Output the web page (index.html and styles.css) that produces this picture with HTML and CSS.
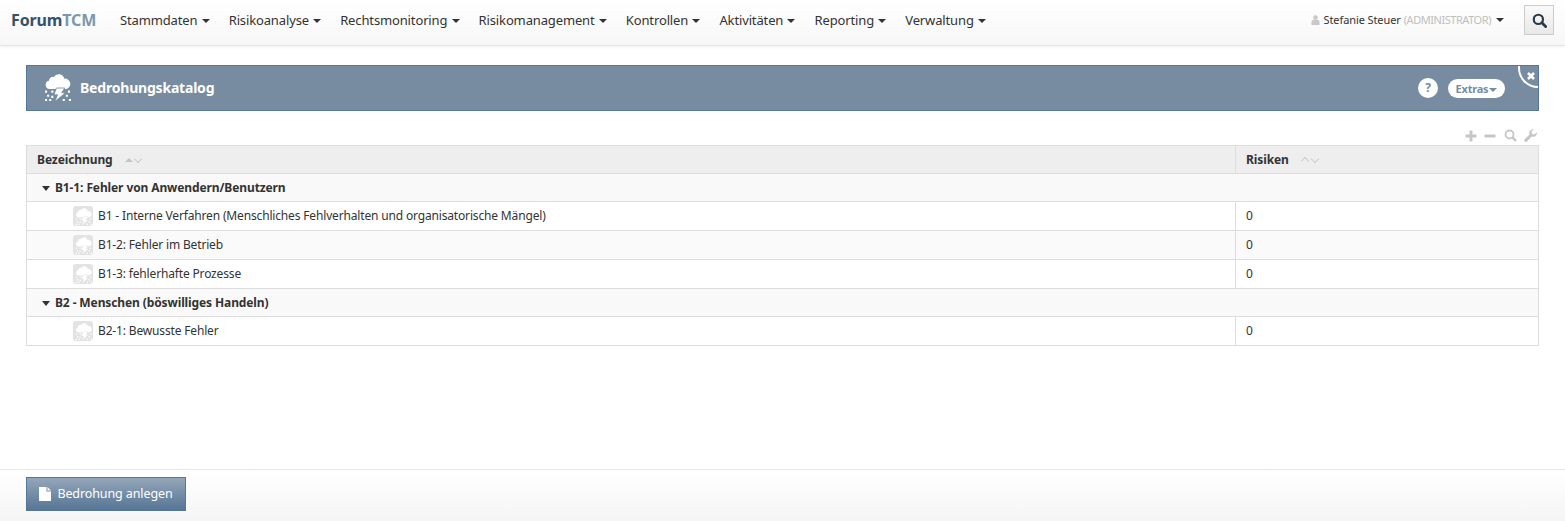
FILE: index.html
```html
<!DOCTYPE html>
<html lang="de">
<head>
<meta charset="utf-8">
<title>Bedrohungskatalog</title>
<link rel="stylesheet" href="styles.css">
</head>
<body>
<svg class="sprite" width="0" height="0" aria-hidden="true">
  <symbol id="storm" viewBox="0 0 26 26">
    <path fill="currentColor" d="M5.500 14.500a4 4 0 0 1-.8-7.900 4 4 0 0 1 4.800-3.800A5.500 5.500 0 0 1 19.500 4.500a5 5 0 0 1 1.500 10z"/>
    <path fill="currentColor" stroke="var(--storm-bg)" stroke-width=".8" d="M12 13.500h8l-3 4.500h3.800L10.500 26.500l2.500-6.500h-3.500z"/>
    <path fill="currentColor" d="M1 16h2v2H1zM7 16h2v2H7zM23 16h2v2h-2zM3 20h2v2H3zM7 21h2v2H7zM21 20h2v2h-2zM1 24h2v2H1zM5 24h2v2H5zM18 24h2v2h-2zM24 24h2v2h-2z"/>
  </symbol>
</svg>
<header class="navbar">
  <a class="brand"><span class="brand-a">Forum</span><span class="brand-b">TCM</span></a>
  <nav class="menu">
    <a class="menu-item">Stammdaten <i class="caret"></i></a>
    <a class="menu-item">Risikoanalyse <i class="caret"></i></a>
    <a class="menu-item">Rechtsmonitoring <i class="caret"></i></a>
    <a class="menu-item">Risikomanagement <i class="caret"></i></a>
    <a class="menu-item">Kontrollen <i class="caret"></i></a>
    <a class="menu-item">Aktivitäten <i class="caret"></i></a>
    <a class="menu-item">Reporting <i class="caret"></i></a>
    <a class="menu-item">Verwaltung <i class="caret"></i></a>
  </nav>
  <div class="user">
    <svg class="user-icon" viewBox="0 0 10 11"><circle cx="5" cy="2.800" r="2.600" fill="currentColor"/><path fill="currentColor" d="M.5 11V7.500Q.5 5.500 2.500 5.200h5Q9.500 5.500 9.500 7.500V11z"/></svg>
    <span class="user-name">Stefanie Steuer</span>
    <span class="user-role">(ADMINISTRATOR)</span>
    <i class="caret user-caret"></i>
  </div>
  <button class="search-btn" aria-label="Suche">
    <svg viewBox="0 0 16 16" width="15" height="15"><circle cx="6.800" cy="6.800" r="4.900" fill="none" stroke="currentColor" stroke-width="2.300"/><path d="M10.500 10.500l4 4" stroke="currentColor" stroke-width="3" stroke-linecap="round"/></svg>
  </button>
</header>

<main class="content">
  <section class="title-bar">
    <svg class="title-icon"><use href="#storm"/></svg>
    <h1 class="title">Bedrohungskatalog</h1>
    <div class="title-actions">
      <span class="help">?</span>
      <span class="extras">Extras<i class="caret extras-caret"></i></span>
    </div>
    <span class="close-tab">
      <svg viewBox="0 0 8 8" width="8" height="8"><path d="M1 1l6 6M7 1l-6 6" stroke="#fff" stroke-width="2.600"/></svg>
    </span>
  </section>

  <div class="tools">
    <svg viewBox="0 0 12 12" width="12" height="12"><path d="M6 .5v11M.5 6h11" stroke="currentColor" stroke-width="3"/></svg>
    <svg viewBox="0 0 12 12" width="12" height="12"><path d="M.5 6h11" stroke="currentColor" stroke-width="3"/></svg>
    <svg viewBox="0 0 13 13" width="13" height="13"><circle cx="5.500" cy="5.500" r="4" fill="none" stroke="currentColor" stroke-width="1.800"/><path d="M8.500 8.500l3.500 3.500" stroke="currentColor" stroke-width="2.400"/></svg>
    <svg viewBox="0 0 13 13" width="13" height="13"><path fill="currentColor" d="M12.800 3.300a3.800 3.800 0 0 1-5 4.300L3 12.400a1.400 1.400 0 0 1-2.300-2.100l4.900-4.700A3.800 3.800 0 0 1 9.700.3L7.500 2.600l.5 2.300 2.300.5z"/></svg>
  </div>

  <table class="grid">
    <colgroup><col><col class="col-risks"></colgroup>
    <thead>
      <tr>
        <th>Bezeichnung <span class="sort sort-a"><i class="sort-up on"></i><i class="sort-down"></i></span></th>
        <th>Risiken <span class="sort sort-b"><i class="sort-up"></i><i class="sort-down"></i></span></th>
      </tr>
    </thead>
    <tbody>
      <tr class="group"><td colspan="2"><i class="caret group-caret"></i>B1-1: Fehler von Anwendern/Benutzern</td></tr>
      <tr class="item"><td><span class="cell"><span class="thumb"><svg><use href="#storm"/></svg></span>B1 - Interne Verfahren (Menschliches Fehlverhalten und organisatorische Mängel)</span></td><td>0</td></tr>
      <tr class="item"><td><span class="cell"><span class="thumb"><svg><use href="#storm"/></svg></span>B1-2: Fehler im Betrieb</span></td><td>0</td></tr>
      <tr class="item"><td><span class="cell"><span class="thumb"><svg><use href="#storm"/></svg></span>B1-3: fehlerhafte Prozesse</span></td><td>0</td></tr>
      <tr class="group"><td colspan="2"><i class="caret group-caret"></i>B2 - Menschen (böswilliges Handeln)</td></tr>
      <tr class="item"><td><span class="cell"><span class="thumb"><svg><use href="#storm"/></svg></span>B2-1: Bewusste Fehler</span></td><td>0</td></tr>
    </tbody>
  </table>
</main>

<footer class="footer">
  <button class="primary-btn">
    <svg viewBox="0 0 12 14" width="12" height="14"><path fill="currentColor" d="M0 0h7.500v4.500H12V14H0zM8.500 0L12 3.500H8.500z"/></svg>
    Bedrohung anlegen
  </button>
</footer>
</body>
</html>
```
FILE: styles.css
```css
* { box-sizing: border-box; }
html, body { height: 100%; }
body {
  margin: 0;
  height: 521px;
  overflow: hidden;
  display: flex;
  flex-direction: column;
  background: #fff;
  color: #333;
  font: 13px/18px "Noto Sans", sans-serif;
}
.sprite { position: absolute; }
.caret {
  display: inline-block;
  width: 0;
  height: 0;
  border-left: 4px solid transparent;
  border-right: 4px solid transparent;
  border-top: 4px solid #333;
  vertical-align: 2px;
  margin-left: 1px;
}
.navbar {
  height: 46px;
  flex: none;
  display: flex;
  align-items: center;
  padding: 0 11px 5px;
  background: linear-gradient(#fff, #f7f7f7);
  border-bottom: 1px solid #e4e4e4;
  box-shadow: 0 1px 3px rgba(0,0,0,.06);
}
.brand { font-size: 16px; font-weight: 700; width: 109px; flex: none; letter-spacing: -.13px; }
.brand-a { color: #34526b; }
.brand-b { color: #7b97b0; }
.menu { display: flex; gap: 19px; }
.menu-item { color: #333; white-space: nowrap; letter-spacing: -.135px; }
.user {
  margin-left: auto;
  display: flex;
  align-items: center;
  font-size: 11px;
  white-space: nowrap;
  margin-right: 20px;
  letter-spacing: -.1px;
}
.user-icon { width: 9px; height: 10px; color: #c8c8c8; margin-right: 4px; }
.user-name { color: #333; margin-right: 3px; }
.user-role { color: #c0c0c0; letter-spacing: -.45px; }
.user-caret { margin-left: 5px; vertical-align: 0; }
.search-btn {
  width: 30px;
  height: 30px;
  padding: 0;
  border: 1px solid #ccc;
  background: linear-gradient(#fafafa, #e8e8e8);
  color: #2b3a47;
  display: flex;
  align-items: center;
  justify-content: center;
}
.content { flex: 1; padding: 19px 26px 0; min-height: 0; }
.title-bar {
  --storm-bg: #778ca1;
  height: 46px;
  display: flex;
  align-items: center;
  background: #778ca1;
  border: 1px solid #55779a;
  padding: 0 33px 0 17px;
  position: relative;
  overflow: hidden;
  color: #fff;
}
.title-icon { width: 27px; height: 27px; margin: 0 9px 2px 0; color: #fff; flex: none; overflow: visible; }
.title { margin: 0; font-size: 14px; line-height: 20px; font-weight: 700; color: #fff; letter-spacing: -.2px; }
.title-actions { margin-left: auto; display: flex; align-items: center; gap: 10px; }
.help {
  width: 20px;
  height: 20px;
  border-radius: 50%;
  background: #fff;
  color: #778ca1;
  font-weight: 700;
  font-size: 12px;
  line-height: 20px;
  text-align: center;
}
.extras {
  height: 19px;
  width: 57px;
  border-radius: 10px;
  background: #fff;
  color: #778ca1;
  font-size: 11px;
  font-weight: 700;
  line-height: 19px;
  text-align: center;
  letter-spacing: -.2px;
  white-space: nowrap;
}
.extras-caret { border-top-color: #778ca1; vertical-align: 1px; }
.close-tab {
  position: absolute;
  top: -1px;
  right: -1px;
  width: 21px;
  height: 23px;
  border-left: 2px solid #fff;
  border-bottom: 2px solid #fff;
  border-bottom-left-radius: 20px;
  display: flex;
  align-items: center;
  justify-content: center;
  padding: 0 0 0 2px;
}
.tools {
  height: 34px;
  display: flex;
  justify-content: flex-end;
  align-items: flex-end;
  gap: 7.500px;
  padding: 0 2px 3px 0;
  color: #c6c6c6;
}
.grid {
  width: 100%;
  border-collapse: collapse;
  table-layout: fixed;
  font-size: 12px;
  letter-spacing: -.16px;
  border: 1px solid #ddd;
}
.col-risks { width: 303px; }
.grid th, .grid td {
  border: 1px solid #ddd;
  padding: 0 10px;
  text-align: left;
  white-space: nowrap;
}
.grid th { height: 28px; background: #eee; font-weight: 700; color: #333; letter-spacing: -.1px; }
.sort { display: inline-flex; align-items: center; gap: 1px; vertical-align: 1px; }
.sort-a { margin-left: 9px; }
.sort-b { margin-left: 9px; gap: 2px; }
.sort i { width: 8px; height: 7px; display: block; position: relative; }
.sort-up::before, .sort-down::before {
  content: "";
  position: absolute;
  left: 1px;
  width: 5px;
  height: 5px;
  border: solid #ccc;
  transform: rotate(45deg);
}
.sort-up::before { top: 2px; border-width: 1px 0 0 1px; }
.sort-down::before { top: 0; border-width: 0 1px 1px 0; }
.sort-up.on::before {
  top: 2px;
  left: 0;
  width: 0;
  height: 0;
  border-width: 0 4px 4px;
  border-color: transparent transparent #c4c4c4;
  transform: none;
}
.grid .group td { height: 28px; background: #f9f9f9; font-weight: 700; padding-left: 15px; color: #333; letter-spacing: -.11px; }
.group-caret { margin: 0 5px 0 0; vertical-align: 1px; border-top-width: 5px; }
.grid .item td { height: 29px; background: #fff; color: #333; }
.grid .item:nth-child(3) td { background: #fafafa; }
.grid .item td:first-child { padding-left: 46px; }
.cell { display: flex; align-items: center; }
.thumb {
  width: 20px;
  height: 20px;
  margin-right: 5px;
  border-radius: 3px;
  background: #e3e3e3;
  color: #fff;
  --storm-bg: #e3e3e3;
  display: flex;
  align-items: center;
  justify-content: center;
}
.thumb svg { width: 17px; height: 17px; }
.footer {
  height: 52px;
  flex: none;
  padding: 7px 26px 0;
  border-top: 1px solid #e8e8e8;
  background: linear-gradient(#fff, #f5f5f5);
}
.primary-btn {
  width: 160px;
  height: 34px;
  display: flex;
  align-items: center;
  justify-content: center;
  gap: 6px;
  color: #fff;
  font: 12.500px/18px "Noto Sans", sans-serif;
  letter-spacing: -.1px;
  white-space: nowrap;
  background: linear-gradient(#94a6b9, #567595);
  border: 1px solid #557799;
  padding: 0;
}
```
